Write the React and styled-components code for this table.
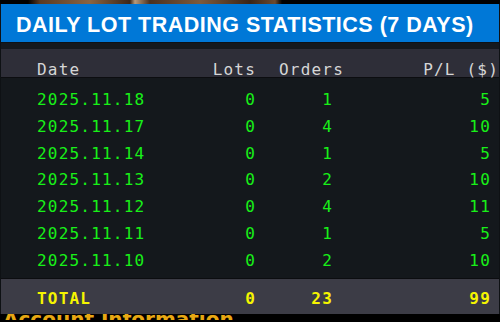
import React from 'react';
import styled, { createGlobalStyle } from 'styled-components';

const GlobalStyle = createGlobalStyle`
    body {
        margin: 0;
        background: #000;
    }
`

const rows = [
    { date: '2025.11.18', lots: 0, orders: 1, pl: 5 },
    { date: '2025.11.17', lots: 0, orders: 4, pl: 10 },
    { date: '2025.11.14', lots: 0, orders: 1, pl: 5 },
    { date: '2025.11.13', lots: 0, orders: 2, pl: 10 },
    { date: '2025.11.12', lots: 0, orders: 4, pl: 11 },
    { date: '2025.11.11', lots: 0, orders: 1, pl: 5 },
    { date: '2025.11.10', lots: 0, orders: 2, pl: 10 },
];

const totals = { lots: 0, orders: 23, pl: 99 };

const Page = styled.div`
    width: 500px;
    height: 322px;
    overflow: hidden;
    background: #000;
`

//ornament strip peeking above the panel
const Ornament = styled.div`
    height: 4px;
    background: linear-gradient(90deg, #000 0, #000 28px, #5a3a22 40px, #8a6442 90px, #3b2618 130px,
        #b89a7a 135px, #4a3020 150px, #7d5a3c 200px, #3a2416 250px, #6b4a30 275px, #000 282px);
`

const Panel = styled.div`
    border-left: 1px solid #0e1114;
    border-right: 1px solid #0e1114;
    background: #14181c;
`

const TitleBar = styled.div`
    height: 39px;
    box-sizing: border-box;
    padding: 3px 0 0 15px;
    background: #0078d7;
    border-bottom: 1px solid #0e1216;
    color: #fff;
    font-family: "Liberation Sans", Arial, sans-serif;
    font-weight: bold;
    font-size: 21.5px;
    letter-spacing: 0.5px;
    line-height: 36px;
    white-space: nowrap;
`

const Gap = styled.div`
    height: 6px;
    background: #15191d;
`

//shared column layout for header, rows and total
const Grid = styled.div`
    display: grid;
    grid-template-columns: 36px 163px 56px 88px 1fr;
    font-family: "DejaVu Sans Mono", "Liberation Mono", monospace;
    font-size: 16px;
    letter-spacing: 1.2px;
    white-space: nowrap;
`

const HeaderRow = styled(Grid)`
    height: 29px;
    box-sizing: border-box;
    padding-top: 10px;
    line-height: 22px;
    background: #2e2e38;
    border-bottom: 1px solid #0c0d10;
    color: #d6d6d6;
`

const Body = styled.div`
    padding: 9px 0 3px;
`

const DataRow = styled(Grid)`
    height: 26.8px;
    line-height: 26.8px;
    color: #18f018;
`

const TotalRow = styled(Grid)`
    height: 36px;
    box-sizing: border-box;
    border-top: 1px solid #0c0d10;
    line-height: 30px;
    padding-top: 5px;
    background: #3c3c46;
    color: #f5f500;
    font-weight: bold;
`

const Cell = styled.div`
    grid-column: ${props => props.col};
    text-align: ${props => props.right ? 'right' : 'left'};
    padding-right: ${props => props.pad || 0}px;
`

//next panel's heading, only its top edge shows below the table
const Below = styled.div`
    height: 6px;
    overflow: hidden;
`

const AccountTitle = styled.div`
    padding-left: 3px;
    font-family: "DejaVu Sans", sans-serif;
    font-weight: bold;
    font-size: 20px;
    line-height: 10px;
    color: #e8a812;
    white-space: nowrap;
`

const App = () => {
    return (
        <Page>
            <GlobalStyle />
            <Ornament />
            <Panel>
                <TitleBar>DAILY LOT TRADING STATISTICS (7 DAYS)</TitleBar>
                <Gap />
                <HeaderRow>
                    <Cell col={2}>Date</Cell>
                    <Cell col={3} right>Lots</Cell>
                    <Cell col={4} right>Orders</Cell>
                    <Cell col={5} right>P/L ($)</Cell>
                </HeaderRow>
                <Body>
                    {rows.map(r => (
                        <DataRow key={r.date}>
                            <Cell col={2}>{r.date}</Cell>
                            <Cell col={3} right>{r.lots}</Cell>
                            <Cell col={4} right pad={11}>{r.orders}</Cell>
                            <Cell col={5} right pad={8}>{r.pl}</Cell>
                        </DataRow>
                    ))}
                </Body>
                <TotalRow>
                    <Cell col={2}>TOTAL</Cell>
                    <Cell col={3} right>{totals.lots}</Cell>
                    <Cell col={4} right pad={11}>{totals.orders}</Cell>
                    <Cell col={5} right pad={8}>{totals.pl}</Cell>
                </TotalRow>
            </Panel>
            <Below>
                <AccountTitle>Account Information</AccountTitle>
            </Below>
        </Page>
    );
}

export default App;
